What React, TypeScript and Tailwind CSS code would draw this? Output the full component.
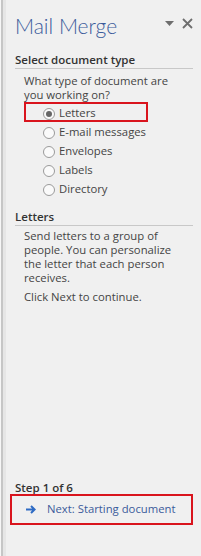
import { useState } from "react"

const TYPES = ["Letters", "E-mail messages", "Envelopes", "Labels", "Directory"]

export default function App() {
    const [selected, setSelected] = useState("Letters")

    return (
        <div className="w-[201px] h-[556px] bg-[#f0f0f0] flex font-['Open_Sans',sans-serif] text-[#444]">
            <div className="w-px shrink-0 bg-[#f7f7f7]" />
            <div className="w-[2px] shrink-0 bg-[#c6c6c6]" />
            <div className="w-[3px] shrink-0 bg-[#e6e6e6]" />
            <div className="flex-1 flex flex-col pl-[9px] pr-[13px]">
                {/* header */}
                <div className="flex items-start justify-between pt-[13px]">
                    <h1 className="text-[21px] leading-[26px] font-light font-['Lato',sans-serif] text-[#3b5b9b]">Mail Merge</h1>
                    <div className="flex items-start gap-[8px] mt-[5px]">
                        <svg width="9" height="5" viewBox="0 0 9 5" className="mt-[3px]">
                            <path d="M0 0 H9 L4.5 5 Z" fill="#6e6e6e" />
                        </svg>
                        <svg width="11" height="11" viewBox="0 0 11 11">
                            <path d="M1 1 L10 10 M10 1 L1 10" stroke="#6e6e6e" strokeWidth="1.8" />
                        </svg>
                    </div>
                </div>

                {/* select type */}
                <div className="mt-[13px] border-b border-[#c8c8c8]">
                    <h2 className="text-[11.5px] leading-[16px] font-semibold text-[#333]">Select document type</h2>
                </div>
                <p className="pl-[9px] pr-[4px] mt-[5px] text-[11.3px] leading-[14px]">
                    What type of document are you working on?
                </p>
                <div className="mt-[2px] flex flex-col">
                    {TYPES.map((t) => (
                        <label
                            key={t}
                            onClick={() => setSelected(t)}
                            className="relative flex items-center gap-[4px] h-[19px] pl-[19px] w-[124px] ml-[9px] text-[11.3px] whitespace-nowrap cursor-pointer"
                        >
                            {t === "Letters" && (
                                <span className="absolute left-0 right-0 -top-[2px] bottom-[1px] border-2 border-[#d9141d]" />
                            )}
                            <span className="w-[12px] h-[12px] shrink-0 rounded-full border border-[#9a9a9a] bg-[#fafafa] flex items-center justify-center">
                                {selected === t && <span className="w-[6px] h-[6px] rounded-full bg-[#666]" />}
                            </span>
                            {t}
                        </label>
                    ))}
                </div>

                {/* description */}
                <div className="mt-[10px] border-b border-[#c8c8c8]">
                    <h2 className="text-[11.5px] leading-[16px] font-semibold text-[#333]">Letters</h2>
                </div>
                <div className="pl-[9px] pr-[4px] mt-[3px] text-[11.3px] leading-[14px]">
                    <p>Send letters to a group of people. You can personalize the letter that each person receives.</p>
                    <p className="mt-[5px]">Click Next to continue.</p>
                </div>

                {/* step */}
                <div className="mt-auto mb-[31px] flex flex-col">
                    <h2 className="text-[11.5px] leading-[16px] font-semibold text-[#333]">Step 1 of 6</h2>
                    <button className="-mt-[2px] -ml-[5px] w-[183px] h-[31px] border-2 border-[#d9141d] flex items-center gap-[11px] pl-[14px] text-[11.3px] text-[#3b5b9b]">
                        <svg width="10" height="9" viewBox="0 0 10 9">
                            <path d="M0 4.5 H8.5 M5 1 L8.6 4.5 L5 8" stroke="#2e6bc4" strokeWidth="2" fill="none" />
                        </svg>
                        Next: Starting document
                    </button>
                </div>
            </div>
        </div>
    )
}
